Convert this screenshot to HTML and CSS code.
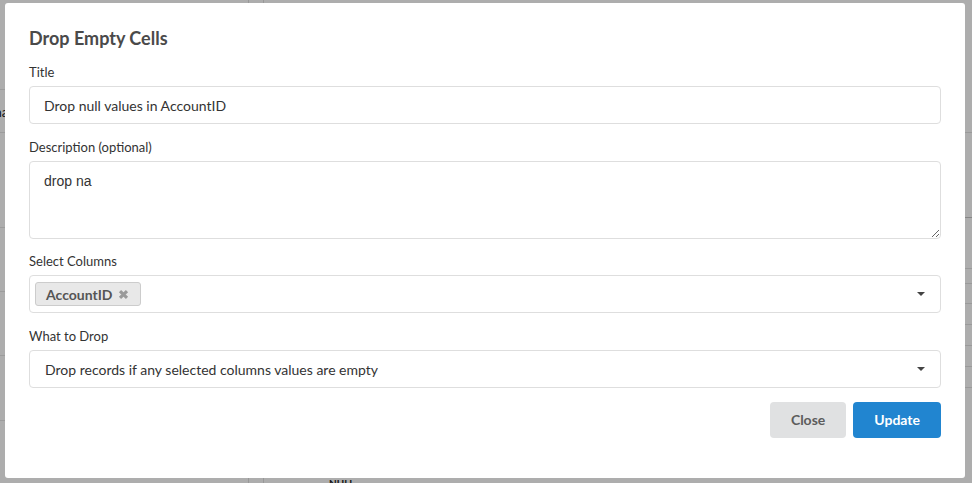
FILE: index.html
```html
<!DOCTYPE html>
<html>
<head>
<meta charset="utf-8">
<title>Drop Empty Cells</title>
<link rel="stylesheet" href="styles.css">
</head>
<body>
<div class="page">
  <aside class="side">
    <div class="side-head">Transformati</div>
    <div class="side-row h43"><span class="clip">Format</span></div>
    <div class="side-row h95 low"><span class="clip">Type</span></div>
    <div class="side-row h64"></div>
    <div class="side-row h64"><span class="clip">Rou</span></div>
    <div class="side-row h65"></div>
    <div class="side-row last"><span class="clip">Sche</span></div>
  </aside>
  <div class="gutter"></div>
  <main class="grid">
    <div class="grid-head"></div>
    <div class="grid-row h85 dark"></div>
    <div class="grid-row h51"></div>
    <div class="grid-row h15"></div>
    <div class="grid-row h20"></div>
    <div class="grid-row h21"></div>
    <div class="grid-row h21"></div>
    <div class="grid-row h21"></div>
    <div class="grid-row h21"></div>
    <div class="grid-row fill"><span class="null">NULL</span></div>
  </main>
</div>

<div class="dimmer">
  <div class="modal">
    <h2 class="modal-title">Drop Empty Cells</h2>

    <div class="field">
      <label class="label" for="t">Title</label>
      <input class="input" id="t" type="text" value="Drop null values in AccountID">
    </div>

    <div class="field tight">
      <label class="label" for="d">Description (optional)</label>
      <textarea class="textarea" id="d">drop na</textarea>
    </div>

    <div class="field">
      <div class="label">Select Columns</div>
      <div class="select multi">
        <span class="chip">AccountID
          <svg class="chip-x" width="11" height="9" viewBox="0 0 11 9"><path d="M2 1.2 L9 7.8 M9 1.2 L2 7.8" stroke="#9a9a9a" stroke-width="3.2" stroke-linecap="butt"/></svg>
        </span>
        <span class="caret"></span>
      </div>
    </div>

    <div class="field tight">
      <div class="label">What to Drop</div>
      <div class="select">
        <span class="select-text">Drop records if any selected columns values are empty</span>
        <span class="caret"></span>
      </div>
    </div>

    <div class="actions">
      <button class="btn btn-close" type="button">Close</button>
      <button class="btn btn-primary" type="button">Update</button>
    </div>
  </div>
</div>
</body>
</html>
```

FILE: styles.css
```css
* { box-sizing: border-box; }

html, body {
  margin: 0;
  padding: 0;
  width: 972px;
  height: 483px;
  overflow: hidden;
  background: #ffffff;
  font-family: Lato, "Noto Sans", sans-serif;
  color: #333333;
}

/* ---------- page behind the dimmer ---------- */
.page {
  display: flex;
  height: 483px;
}

.side {
  width: 249px;
  border-right: 1px solid #e0e0e0;
  display: flex;
  flex-direction: column;
  overflow: hidden;
}

.side-head {
  height: 90px;
  padding-top: 13px;
  font-size: 20px;
  font-weight: 700;
  color: #111;
  text-indent: -118px;
  white-space: nowrap;
  border-bottom: 1px solid #e6e6e6;
}

.side-row {
  border-bottom: 1px solid #e6e6e6;
  font-size: 14px;
  color: #222;
  display: flex;
  align-items: center;
  white-space: nowrap;
}

.side-row.low { align-items: flex-end; padding-bottom: 20px; }
.side-row.last { flex: 1; align-items: flex-start; padding-top: 24px; border-bottom: 0; }

.clip { margin-left: -30px; }

.h43 { height: 43px; }
.h95 { height: 95px; }
.h64 { height: 64px; }
.h65 { height: 65px; }

.gutter {
  width: 15px;
  border-right: 1px solid #e0e0e0;
}

.grid {
  flex: 1;
  display: flex;
  flex-direction: column;
}

.grid-head { height: 133px; border-bottom: 1px solid #e3e3e3; }
.grid-row { border-bottom: 1px solid #e3e3e3; }
.grid-row.dark { border-bottom-color: #c8c8c8; }
.h85 { height: 85px; }
.h51 { height: 51px; }
.h15 { height: 15px; }
.h20 { height: 20px; }
.h21 { height: 21px; }
.grid-row.fill {
  flex: 1;
  border-bottom: 0;
  display: flex;
  align-items: flex-end;
  padding-left: 65px;
}

.null {
  font-size: 10px;
  font-weight: 700;
  color: #222;
  line-height: 10px;
  margin-bottom: -5px;
}

/* ---------- dimmer + modal ---------- */
.dimmer {
  position: fixed;
  inset: 0;
  background: rgba(0, 0, 0, 0.32);
  padding: 3px 0 0 5px;
}

.modal {
  width: 960px;
  height: 475px;
  background: #ffffff;
  border-radius: 3px;
  padding: 21px 24px 0 24px;
}

.modal-title {
  margin: 0 0 12px 0;
  font-size: 18px;
  line-height: 28px;
  font-weight: 700;
  color: #4a4a4a;
}

.field { margin-bottom: 15px; }
.field.tight { margin-bottom: 14px; }

.label {
  display: block;
  font-size: 13px;
  line-height: 17px;
  color: #333333;
  margin-bottom: 5px;
}

.input {
  display: block;
  width: 100%;
  height: 38px;
  margin: 0;
  padding: 0 14px;
  border: 1px solid #dedede;
  border-radius: 4px;
  font-family: Lato, "Noto Sans", sans-serif;
  font-size: 14px;
  color: #333333;
  background: #ffffff;
  outline: none;
}

.textarea {
  display: block;
  width: 100%;
  height: 78px;
  margin: 0;
  padding: 10px 14px;
  border: 1px solid #dedede;
  border-radius: 4px;
  font-family: "Liberation Sans", Arial, sans-serif;
  font-size: 14px;
  line-height: 1.4;
  color: #333333;
  background: #ffffff;
  resize: both;
  outline: none;
}

.select {
  position: relative;
  display: flex;
  align-items: center;
  height: 38px;
  padding: 0 14px 0 15px;
  border: 1px solid #dedede;
  border-radius: 4px;
  font-size: 14px;
  color: #333333;
}

.select.multi { padding-left: 5px; }

.select-text { flex: 1; }

.chip {
  display: inline-flex;
  align-items: center;
  gap: 5px;
  height: 24px;
  padding: 0 11px 0 10px;
  background: #e8e8e8;
  border: 1px solid #cccccc;
  border-radius: 3px;
  font-size: 14px;
  font-weight: 700;
  color: #555555;
  margin-right: auto;
}

.chip-x { display: block; margin-top: 1px; }

.caret {
  width: 0;
  height: 0;
  border-left: 4px solid transparent;
  border-right: 4px solid transparent;
  border-top: 4px solid #444444;
  margin-left: auto;
  margin-right: 1px;
}

.actions {
  display: flex;
  justify-content: flex-end;
  gap: 7px;
}

.btn {
  height: 36px;
  padding: 0 21px;
  border: 0;
  border-radius: 4px;
  font-family: Lato, "Noto Sans", sans-serif;
  font-size: 14px;
  font-weight: 700;
  line-height: 14px;
  cursor: pointer;
}

.btn-close {
  background: #e0e1e2;
  color: #5c5c5c;
}

.btn-primary {
  background: #2185d0;
  color: #ffffff;
}
```
